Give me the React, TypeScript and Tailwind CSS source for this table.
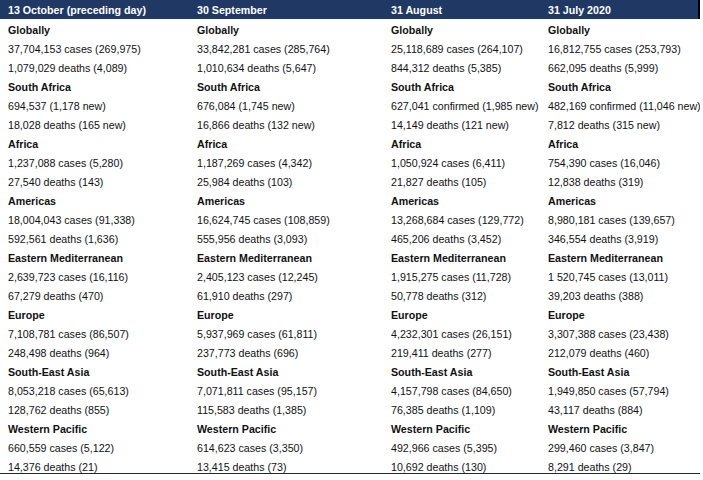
const columns = [
  {
    title: "13 October (preceding day)",
    width: "w-[189px]",
    rows: [
      ["Globally", "37,704,153 cases (269,975)", "1,079,029 deaths (4,089)"],
      ["South Africa", "694,537 (1,178 new)", "18,028 deaths (165 new)"],
      ["Africa", "1,237,088 cases (5,280)", "27,540 deaths (143)"],
      ["Americas", "18,004,043 cases (91,338)", "592,561 deaths (1,636)"],
      ["Eastern Mediterranean", "2,639,723 cases (16,116)", "67,279 deaths (470)"],
      ["Europe", "7,108,781 cases (86,507)", "248,498 deaths (964)"],
      ["South-East Asia", "8,053,218 cases (65,613)", "128,762 deaths (855)"],
      ["Western Pacific", "660,559 cases (5,122)", "14,376 deaths (21)"],
    ],
  },
  {
    title: "30 September",
    width: "w-[194px]",
    rows: [
      ["Globally", "33,842,281 cases (285,764)", "1,010,634 deaths (5,647)"],
      ["South Africa", "676,084 (1,745 new)", "16,866 deaths (132 new)"],
      ["Africa", "1,187,269 cases (4,342)", "25,984 deaths (103)"],
      ["Americas", "16,624,745 cases (108,859)", "555,956 deaths (3,093)"],
      ["Eastern Mediterranean", "2,405,123 cases (12,245)", "61,910 deaths (297)"],
      ["Europe", "5,937,969 cases (61,811)", "237,773 deaths (696)"],
      ["South-East Asia", "7,071,811 cases (95,157)", "115,583 deaths (1,385)"],
      ["Western Pacific", "614,623 cases (3,350)", "13,415 deaths (73)"],
    ],
  },
  {
    title: "31 August",
    width: "w-[157px]",
    rows: [
      ["Globally", "25,118,689 cases (264,107)", "844,312 deaths (5,385)"],
      ["South Africa", "627,041 confirmed (1,985 new)", "14,149 deaths (121 new)"],
      ["Africa", "1,050,924 cases (6,411)", "21,827 deaths (105)"],
      ["Americas", "13,268,684 cases (129,772)", "465,206 deaths (3,452)"],
      ["Eastern Mediterranean", "1,915,275 cases (11,728)", "50,778 deaths (312)"],
      ["Europe", "4,232,301 cases (26,151)", "219,411 deaths (277)"],
      ["South-East Asia", "4,157,798 cases (84,650)", "76,385 deaths (1,109)"],
      ["Western Pacific", "492,966 cases (5,395)", "10,692 deaths (130)"],
    ],
  },
  {
    title: "31 July 2020",
    width: "w-[157px]",
    rows: [
      ["Globally", "16,812,755 cases (253,793)", "662,095 deaths (5,999)"],
      ["South Africa", "482,169 confirmed (11,046 new)", "7,812 deaths (315 new)"],
      ["Africa", "754,390 cases (16,046)", "12,838 deaths (319)"],
      ["Americas", "8,980,181 cases (139,657)", "346,554 deaths (3,919)"],
      ["Eastern Mediterranean", "1 520,745 cases (13,011)", "39,203 deaths (388)"],
      ["Europe", "3,307,388 cases (23,438)", "212,079 deaths (460)"],
      ["South-East Asia", "1,949,850 cases (57,794)", "43,117 deaths (884)"],
      ["Western Pacific", "299,460 cases (3,847)", "8,291 deaths (29)"],
    ],
  },
];

const cell = "h-[19px] pl-2 pt-[3px] flex items-center whitespace-nowrap";

export default function App() {
  return (
    <div className="w-[703px] h-[480px] bg-white font-['Liberation_Sans',Arial,sans-serif] text-[10.67px] text-[#111]">
      <div className="w-[700px] border-b border-[#1e2a3a]">
        <div className="flex h-[19px] border-r-2 border-black w-[700px]">
          {columns.map(col => (
            <div
              key={col.title}
              className={`${col.width} bg-[#1f3864] text-white font-bold pl-2 flex items-center whitespace-nowrap`}
            >
              {col.title}
            </div>
          ))}
          <div className="w-[1px] bg-[#1f3864]" />
        </div>
        <div className="flex h-[454px] overflow-hidden">
          {columns.map(col => (
            <div key={col.title} className={`${col.width} shrink-0`}>
              {col.rows.map(([region, cases, deaths]) => (
                <div key={region}>
                  <div className={`${cell} font-bold`}>{region}</div>
                  <div className={cell}>{cases}</div>
                  <div className={cell}>{deaths}</div>
                </div>
              ))}
            </div>
          ))}
        </div>
      </div>
    </div>
  );
}
